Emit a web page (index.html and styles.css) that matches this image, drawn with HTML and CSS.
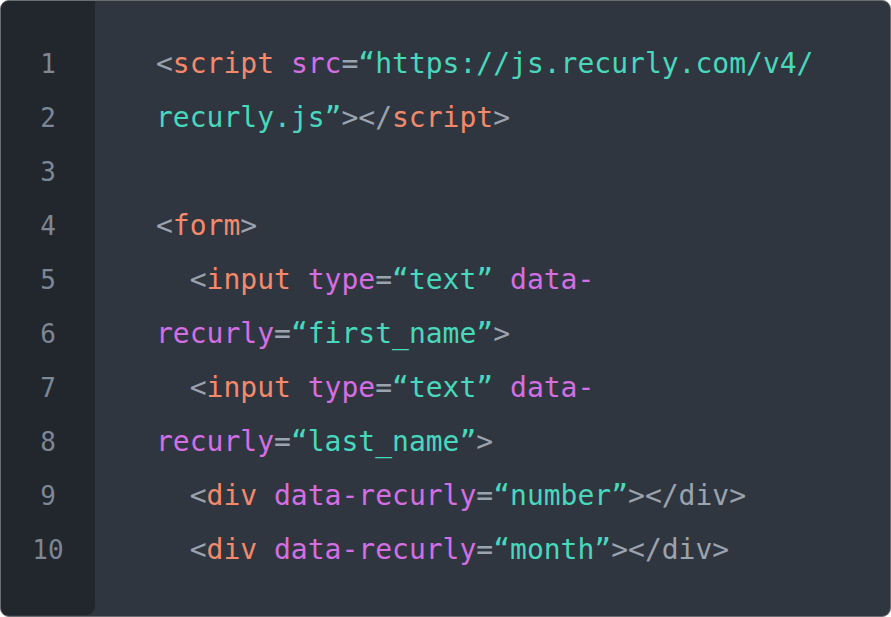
FILE: index.html
```html
<!DOCTYPE html>
<html>
<head>
<meta charset="utf-8">
<link rel="stylesheet" href="styles.css">
</head>
<body>
<div class="card">
  <div class="gutter">
    <div class="ln">1</div>
    <div class="ln">2</div>
    <div class="ln">3</div>
    <div class="ln">4</div>
    <div class="ln">5</div>
    <div class="ln">6</div>
    <div class="ln">7</div>
    <div class="ln">8</div>
    <div class="ln">9</div>
    <div class="ln">10</div>
  </div>
  <div class="code">
    <div class="line"><span class="p">&lt;</span><span class="t">script</span> <span class="a">src</span><span class="p">=</span><span class="s">“https://js.recurly.com/v4/</span></div>
    <div class="line"><span class="s">recurly.js”</span><span class="p">&gt;&lt;/</span><span class="t">script</span><span class="p">&gt;</span></div>
    <div class="line"> </div>
    <div class="line"><span class="p">&lt;</span><span class="t">form</span><span class="p">&gt;</span></div>
    <div class="line">  <span class="p">&lt;</span><span class="t">input</span> <span class="a">type</span><span class="p">=</span><span class="s">“text”</span> <span class="a">data-</span></div>
    <div class="line"><span class="a">recurly</span><span class="p">=</span><span class="s">“first_name”</span><span class="p">&gt;</span></div>
    <div class="line">  <span class="p">&lt;</span><span class="t">input</span> <span class="a">type</span><span class="p">=</span><span class="s">“text”</span> <span class="a">data-</span></div>
    <div class="line"><span class="a">recurly</span><span class="p">=</span><span class="s">“last_name”</span><span class="p">&gt;</span></div>
    <div class="line">  <span class="p">&lt;</span><span class="t">div</span> <span class="a">data-recurly</span><span class="p">=</span><span class="s">“number”</span><span class="p">&gt;&lt;/div&gt;</span></div>
    <div class="line">  <span class="p">&lt;</span><span class="t">div</span> <span class="a">data-recurly</span><span class="p">=</span><span class="s">“month”</span><span class="p">&gt;&lt;/div&gt;</span></div>
  </div>
</div>
</body>
</html>
```
FILE: styles.css
```css
html, body {
  margin: 0;
  padding: 0;
  background: #ffffff;
}
.card {
  width: 891px;
  height: 617px;
  box-sizing: border-box;
  background: #30363f;
  border: 1px solid #6a6e73;
  border-radius: 9px;
  display: flex;
  overflow: hidden;
  font-family: "DejaVu Sans Mono", "Liberation Mono", monospace;
  font-size: 28px;
  line-height: 54px;
}
.gutter {
  width: 94px;
  flex: none;
  background: #22272d;
  border-bottom-right-radius: 9px;
  margin-bottom: 1px;
  padding-top: 36px;
  box-sizing: border-box;
}
.ln {
  text-align: center;
  color: #7d8796;
  font-size: 26px;
}
.code {
  padding-top: 36px;
  padding-left: 61px;
}
.line {
  white-space: pre;
  height: 54px;
  color: #9ba3ae;
}
.p { color: #9ba3ae; }
.t { color: #f5896b; }
.a { color: #d46ee3; }
.s { color: #48d8bd; }
```
